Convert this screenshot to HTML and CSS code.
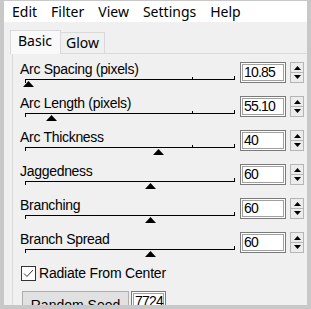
FILE: index.html
```html
<!DOCTYPE html>
<html lang="en">
<head>
  <meta charset="UTF-8" />
  <title>Lightning - Basic</title>
  <link rel="stylesheet" href="styles.css">
</head>
<body>
  <div class="window">
    <div class="menubar">
      <span class="menu">Edit</span>
      <span class="menu">Filter</span>
      <span class="menu">View</span>
      <span class="menu">Settings</span>
      <span class="menu">Help</span>
    </div>

    <div class="tabs">
      <div class="tab active">Basic</div>
      <div class="tab">Glow</div>
    </div>

    <div class="panel">
      <div class="row">
        <div class="ctl">
          <div class="label">Arc Spacing (pixels)</div>
          <div class="track">
            <i class="tick first"></i><i class="tick mid"></i><i class="tick last"></i>
            <span class="thumb" style="left:3px"></span>
          </div>
        </div>
        <div class="num">10.85</div>
        <div class="spin"><b class="up"></b><b class="down"></b></div>
      </div>

      <div class="row">
        <div class="ctl">
          <div class="label">Arc Length (pixels)</div>
          <div class="track">
            <i class="tick first"></i><i class="tick mid"></i><i class="tick last"></i>
            <span class="thumb" style="left:26px"></span>
          </div>
        </div>
        <div class="num">55.10</div>
        <div class="spin"><b class="up"></b><b class="down"></b></div>
      </div>

      <div class="row">
        <div class="ctl">
          <div class="label">Arc Thickness</div>
          <div class="track">
            <i class="tick first"></i><i class="tick mid"></i><i class="tick last"></i>
            <span class="thumb" style="left:133px"></span>
          </div>
        </div>
        <div class="num">40</div>
        <div class="spin"><b class="up"></b><b class="down"></b></div>
      </div>

      <div class="row">
        <div class="ctl">
          <div class="label">Jaggedness</div>
          <div class="track">
            <i class="tick first"></i><i class="tick last"></i>
            <span class="thumb" style="left:125px"></span>
          </div>
        </div>
        <div class="num">60</div>
        <div class="spin"><b class="up"></b><b class="down"></b></div>
      </div>

      <div class="row">
        <div class="ctl">
          <div class="label">Branching</div>
          <div class="track">
            <i class="tick first"></i><i class="tick last"></i>
            <span class="thumb" style="left:125px"></span>
          </div>
        </div>
        <div class="num">60</div>
        <div class="spin"><b class="up"></b><b class="down"></b></div>
      </div>

      <div class="row">
        <div class="ctl">
          <div class="label">Branch Spread</div>
          <div class="track">
            <i class="tick first"></i><i class="tick last"></i>
            <span class="thumb" style="left:125px"></span>
          </div>
        </div>
        <div class="num">60</div>
        <div class="spin"><b class="up"></b><b class="down"></b></div>
      </div>

      <label class="check">
        <span class="box">
          <svg width="13" height="13" viewBox="0 0 13 13"><polyline points="2,6.5 5,9.5 11,3" fill="none" stroke="#333" stroke-width="1"/></svg>
        </span>
        Radiate From Center
      </label>

      <div class="seed">
        <div class="btn">Random Seed</div>
        <div class="num small">7724</div>
      </div>
    </div>
  </div>
</body>
</html>
```

FILE: styles.css
```css
body {
  margin: 0;
  background: #c8c8c8;
  font-family: "Liberation Sans", Arial, sans-serif;
  color: #000;
}
.window {
  margin: 1px 4px 0 4px;
  height: 304px;
  background: #f0f0f0;
  overflow: hidden;
}
.menubar {
  height: 21px;
  background: #fff;
  padding-left: 1px;
  display: flex;
  font-family: "Noto Sans", sans-serif;
  font-size: 14px;
  line-height: 21px;
}
.menu {
  padding: 0 7px;
}

.tabs {
  display: flex;
  align-items: flex-end;
  padding: 8px 0 0 6px;
  font-family: "Noto Sans", sans-serif;
  font-size: 14px;
  line-height: 20px;
  position: relative;
  z-index: 1;
}
.tab {
  box-sizing: border-box;
  width: 44px;
  height: 21px;
  padding-left: 5px;
  border-top: 1px solid #d9d9d9;
  border-right: 1px solid #d9d9d9;
  background: #f0f0f0;
}
.tab.active {
  width: 51px;
  height: 24px;
  padding-left: 7px;
  margin-bottom: -1px;
  border-left: 1px solid #d9d9d9;
  background: #f9f9f9;
}

.panel {
  margin: 0 -2px 0 8px;
  border: 1px solid #d9d9d9;
  padding: 7px 0 0 7px;
  height: 300px;
}
.row {
  display: flex;
  height: 34px;
}
.ctl {
  width: 220px;
}
.label {
  font-size: 14px;
  line-height: 16px;
  letter-spacing: -0.3px;
}
.track {
  position: relative;
  margin: 2px 0 0 5px;
  width: 210px;
  height: 16px;
  border-top: 1px solid #000;
}
.tick {
  position: absolute;
  width: 1px;
  background: #000;
}
.tick.first { left: 0; top: 0; height: 3px; }
.tick.mid { left: 167px; top: -3px; height: 3px; }
.tick.last { left: 209px; top: -4px; height: 4px; }
.thumb {
  position: absolute;
  top: 1px;
  width: 11px;
  height: 6px;
  margin-left: -5px;
  background: #000;
  clip-path: polygon(50% 0, 100% 100%, 0 100%);
}

.num {
  box-sizing: border-box;
  margin-top: 1px;
  width: 46px;
  height: 21px;
  border: 1px solid #7a7a7a;
  box-shadow: inset 0 0 0 1px #fff, inset 0 0 0 2px #a0a0a0;
  background: #fff;
  padding: 2px 0 0 3px;
  font-size: 14px;
  line-height: 15px;
  letter-spacing: -0.8px;
}
.spin {
  margin: 1px 0 0 4px;
  width: 14px;
  height: 21px;
  display: flex;
  flex-direction: column;
}
.spin b {
  flex: 1;
  box-sizing: border-box;
  border: 1px solid #b5b5b5;
  background: #ececec;
  position: relative;
}
.spin b.down { border-top: none; }
.spin b::after {
  content: "";
  position: absolute;
  left: 3px;
  top: 3px;
  width: 7px;
  height: 4px;
  background: #000;
}
.spin b.up::after { clip-path: polygon(50% 0, 100% 100%, 0 100%); }
.spin b.down::after { top: 2px; clip-path: polygon(0 0, 100% 0, 50% 100%); }

.check {
  display: flex;
  align-items: flex-start;
  height: 18px;
  font-size: 14px;
  line-height: 16px;
  letter-spacing: -0.2px;
}
.box {
  box-sizing: border-box;
  width: 15px;
  height: 15px;
  margin: 1px 3px 0 1px;
  border: 1px solid #333;
  background: #fff;
}
.box svg { display: block; }

.seed {
  display: flex;
  margin-top: 8px;
}
.btn {
  box-sizing: border-box;
  margin-left: 2px;
  width: 107px;
  height: 23px;
  border: 1px solid #adadad;
  background: #e1e1e1;
  text-align: center;
  font-size: 14px;
  line-height: 16px;
  padding-top: 5px;
}
.num.small {
  margin: 0 0 0 2px;
  width: 35px;
}
```
